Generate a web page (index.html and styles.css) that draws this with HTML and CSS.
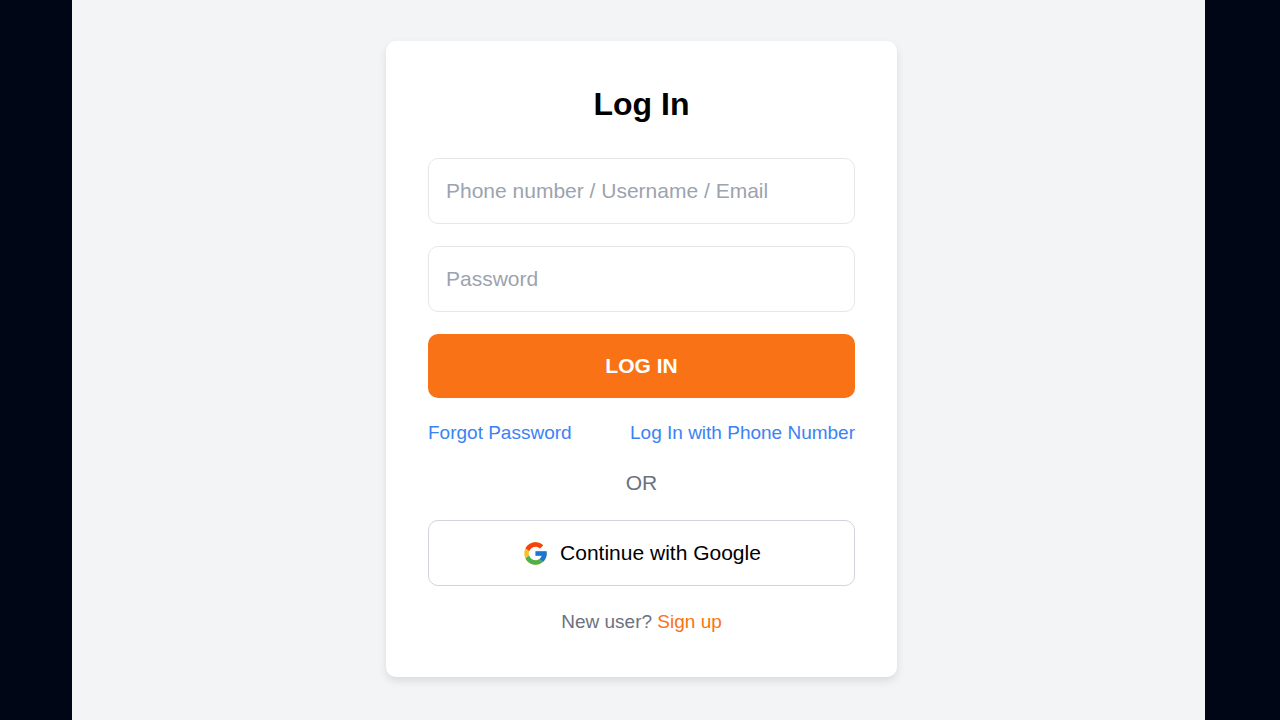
FILE: index.html
```
<!DOCTYPE html>
<html lang="en">
<head>
    <meta charset="UTF-8">
    <meta name="viewport" content="width=device-width, initial-scale=1.0">
    <title>Log In</title>
    <link rel="stylesheet" href="styles.css">
</head>
<body>
    <main class="page">
        <div class="card">
            <h1 class="title">Log In</h1>
            <form class="login-form">
                <input type="text" class="field" placeholder="Phone number / Username / Email" aria-label="Phone number / Username / Email">
                <input type="password" class="field" placeholder="Password" aria-label="Password">
                <button type="submit" class="btn-login">LOG IN</button>
            </form>
            <div class="links">
                <a href="#">Forgot Password</a>
                <a href="#">Log In with Phone Number</a>
            </div>
            <div class="divider">OR</div>
            <button type="button" class="btn-google">
                <svg class="google-icon" viewBox="0 0 48 48" aria-hidden="true">
                    <path fill="#fbc02d" d="M43.6 20H24v8h11.3C33.7 32.7 29.2 36 24 36c-6.6 0-12-5.4-12-12s5.4-12 12-12c3.1 0 5.9 1.2 8 3l5.6-5.6C34 6.1 29.3 4 24 4 13 4 4 13 4 24s9 20 20 20 20-9 20-20c0-1.300-.1-2.700-.4-4z"/>
                    <path fill="#f4430e" d="M6.300 14.700l6.600 4.800C14.700 15.100 19 12 24 12c3.100 0 5.900 1.200 8 3l5.700-5.700C34 6.100 29.300 4 24 4 16.300 4 9.700 8.300 6.300 14.700z"/>
                    <path fill="#4caf50" d="M24 44c5.200 0 9.900-2 13.400-5.200l-6.200-5.200C29.200 35.100 26.700 36 24 36c-5.200 0-9.600-3.300-11.300-8l-6.500 5C9.500 39.600 16.200 44 24 44z"/>
                    <path fill="#1976d2" d="M43.600 20H24v8h11.300c-.8 2.200-2.200 4.200-4.100 5.600l6.200 5.200C37 39.200 44 34 44 24c0-1.300-.1-2.700-.4-4z"/>
                </svg>
                <span>Continue with Google</span>
            </button>
            <p class="signup">New user? <a href="#">Sign up</a></p>
        </div>
    </main>
</body>
</html>
```
FILE: styles.css
```
* {
    box-sizing: border-box;
}
body {
    margin: 0;
    padding: 0 75px 0 72px;
    background-color: #000616;
    font-family: Arial, "Liberation Sans", sans-serif;
    font-size: 21px;
}
a {
    text-decoration: none;
}
.page {
    display: flex;
    align-items: center;
    justify-content: center;
    min-height: 100vh;
    padding: 0 0 2px 6px;
    background-color: #f3f4f6;
}
.card {
    width: 100%;
    max-width: 511px;
    padding: 42px;
    background: white;
    border-radius: 10px;
    box-shadow: 0 4px 8px rgba(0, 0, 0, 0.1);
}
.title {
    margin: 0 0 33px;
    font-size: 32px;
    line-height: 42px;
    text-align: center;
    color: #000;
}
.login-form {
    display: flex;
    flex-direction: column;
    gap: 22px;
}
.field {
    width: 100%;
    height: 66px;
    padding: 0 17px;
    border: 1px solid #e5e7eb;
    border-radius: 10px;
    font-family: inherit;
    font-size: 21px;
}
.field::placeholder {
    color: #9ca3af;
}
.btn-login {
    height: 64px;
    border: none;
    border-radius: 10px;
    background-color: #f97316;
    color: white;
    font-family: inherit;
    font-size: 21px;
    font-weight: bold;
    cursor: pointer;
}
.btn-login:hover {
    background-color: #ea580c;
}
.links {
    display: flex;
    justify-content: space-between;
    margin: 21px 0;
    font-size: 19px;
    line-height: 27px;
}
.links a {
    color: #3b82f6;
}
.divider {
    margin-bottom: 22px;
    line-height: 31px;
    text-align: center;
    color: #6b7280;
}
.btn-google {
    display: flex;
    align-items: center;
    justify-content: center;
    gap: 11px;
    width: 100%;
    height: 66px;
    border: 1px solid #d1d5db;
    border-radius: 10px;
    background: white;
    color: #000;
    font-family: inherit;
    font-size: 21px;
    cursor: pointer;
}
.google-icon {
    width: 27px;
    height: 27px;
}
.signup {
    margin: 22px 0 0;
    font-size: 19px;
    line-height: 27px;
    text-align: center;
    color: #6b7280;
}
.signup a {
    color: #f97316;
}
```
